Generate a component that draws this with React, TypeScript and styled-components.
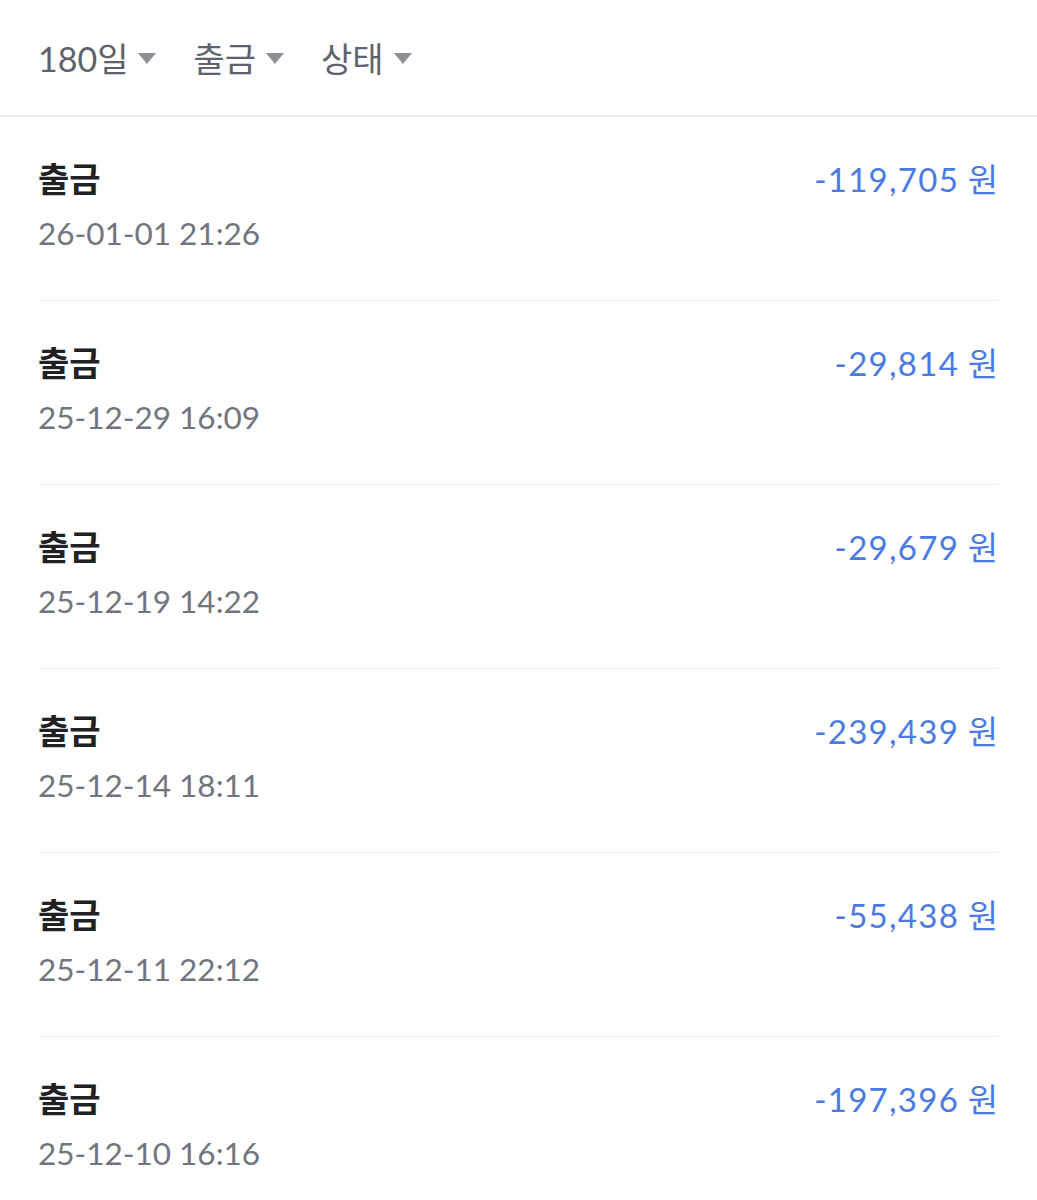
import styled, { createGlobalStyle } from "styled-components";

const GlobalStyle = createGlobalStyle`
  html, body {
    margin: 0;
    padding: 0;
    background: #ffffff;
  }
  body {
    font-family: Lato, "Noto Sans CJK KR", sans-serif;
    -webkit-font-smoothing: antialiased;
  }
`;

const transactions = [
  { id: 1, type: "출금", datetime: "26-01-01 21:26", amount: "-119,705" },
  { id: 2, type: "출금", datetime: "25-12-29 16:09", amount: "-29,814" },
  { id: 3, type: "출금", datetime: "25-12-19 14:22", amount: "-29,679" },
  { id: 4, type: "출금", datetime: "25-12-14 18:11", amount: "-239,439" },
  { id: 5, type: "출금", datetime: "25-12-11 22:12", amount: "-55,438" },
  { id: 6, type: "출금", datetime: "25-12-10 16:16", amount: "-197,396" },
];

const filters = ["180일", "출금", "상태"];

const Page = styled.main`
  width: 1037px;
  min-height: 1200px;
  overflow: hidden;
`;

const FilterBar = styled.div`
  display: flex;
  align-items: center;
  gap: 37px;
  height: 115px;
  padding: 0 38px;
  border-bottom: 2px solid #e8e8ea;
`;

const FilterButton = styled.button`
  display: flex;
  align-items: center;
  gap: 10px;
  padding: 0;
  border: none;
  background: none;
  font-family: Lato, "Noto Sans CJK KR", sans-serif;
  font-size: 34px;
  color: #5e626c;
  cursor: pointer;
`;

const Caret = styled.span`
  display: inline-block;
  width: 0;
  height: 0;
  margin-top: 2px;
  border-left: 9px solid transparent;
  border-right: 9px solid transparent;
  border-top: 11px solid #8e8e94;
`;

const List = styled.ul`
  list-style: none;
  margin: 0;
  padding: 0 39px 0 38px;
`;

const Row = styled.li`
  display: flex;
  justify-content: space-between;
  align-items: flex-start;
  padding: 42px 0 47px;
  border-bottom: 1px solid #efeff1;

  &:last-child {
    border-bottom: none;
  }
`;

const Info = styled.div`
  display: flex;
  flex-direction: column;
  gap: 14px;
`;

const Title = styled.div`
  font-size: 34px;
  line-height: 40px;
  font-weight: 700;
  color: #202125;
`;

const DateText = styled.div`
  font-size: 31.5px;
  line-height: 40px;
  color: #72757e;
`;

const Amount = styled.div`
  font-size: 33px;
  line-height: 40px;
  color: #4a7be2;
  white-space: nowrap;
`;

const Figure = styled.span`
  letter-spacing: 1.3px;
`;

const Won = styled.span`
  margin-left: 0;
`;

function App() {
  return (
    <Page>
      <GlobalStyle />
      <FilterBar>
        {filters.map((label) => (
          <FilterButton key={label}>
            {label}
            <Caret />
          </FilterButton>
        ))}
      </FilterBar>
      <List>
        {transactions.map((t) => (
          <Row key={t.id}>
            <Info>
              <Title>{t.type}</Title>
              <DateText>{t.datetime}</DateText>
            </Info>
            <Amount>
              <Figure>{t.amount}</Figure> <Won>원</Won>
            </Amount>
          </Row>
        ))}
      </List>
    </Page>
  );
}

export default App;
